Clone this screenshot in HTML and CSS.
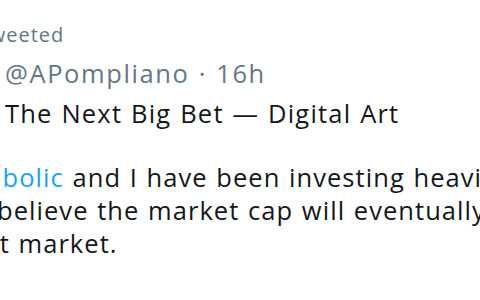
FILE: index.html
```html
<!DOCTYPE html>
<html>
<head>
<meta charset="utf-8">
<link rel="stylesheet" href="styles.css">
</head>
<body>
<div class="tweet">
  <div class="label"><span class="cut cut-label">Retweeted</span></div>
  <div class="meta">@APompliano · 16h</div>
  <div class="title">The Next Big Bet — Digital Art</div>
  <div class="body">
    <div class="line"><span class="cut cut-1"><a class="mention">Symbolic</a> and I have been investing heavily</span></div>
    <div class="line"><span class="cut cut-2">believe the market cap will eventually</span></div>
    <div class="line"><span class="cut cut-3">art market.</span></div>
  </div>
</div>
</body>
</html>
```

FILE: styles.css
```css
html, body {
  margin: 0;
  padding: 0;
  background: #ffffff;
  overflow: hidden;
  width: 480px;
  height: 300px;
}
.tweet {
  font-family: "Open Sans", "Noto Sans", sans-serif;
  color: #14171a;
  display: flex;
  flex-direction: column;
}
.label, .meta, .title, .line {
  white-space: nowrap;
  overflow: hidden;
}
.label {
  color: #657786;
  font-size: 20px;
  letter-spacing: 1px;
  line-height: 28px;
  padding: 21px 0 4px;
}
.meta {
  color: #657786;
  font-size: 25.5px;
  letter-spacing: 1.6px;
  word-spacing: 1px;
  line-height: 40px;
  padding-left: 5px;
}
.title {
  font-size: 25.5px;
  letter-spacing: 1.2px;
  word-spacing: 1px;
  line-height: 40px;
  padding-left: 5px;
}
.body {
  margin-top: 28px;
  font-size: 25.5px;
  letter-spacing: 1.05px;
  word-spacing: 1px;
  line-height: 33px;
}
.mention {
  color: #1da1f2;
}
.cut { display: inline-block; }
.cut-label { margin-left: -44px; }
.cut-1 { margin-left: -51px; }
.cut-2 { margin-left: -3px; }
.cut-3 { margin-left: -27px; }
```
